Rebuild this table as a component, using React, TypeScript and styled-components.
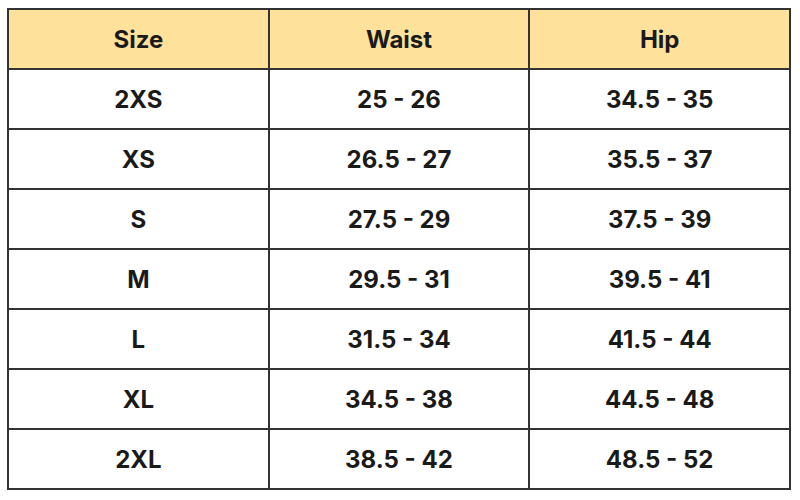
import React from "react";
import styled, { createGlobalStyle } from "styled-components";

const Global = createGlobalStyle`
  html, body { margin: 0; padding: 0; background: #ffffff; }
  body { font-family: "Inter", "Open Sans", sans-serif; }
`;

const Page = styled.div`
  width: 800px;
  height: 500px;
  padding: 8px 0 0 7px;
  box-sizing: border-box;
`;

const Table = styled.table`
  border-collapse: collapse;
  width: 784px;
  table-layout: fixed;
`;

const HeadCell = styled.th`
  background: #fee29b;
  border: 2px solid #333333;
  height: 58px;
  padding: 0;
  font-size: 24px;
  font-weight: 700;
  color: #1a1a1a;
  text-align: center;
  vertical-align: middle;
`;

const Cell = styled.td`
  background: #ffffff;
  border: 2px solid #333333;
  height: 58px;
  padding: 0;
  font-size: 24px;
  font-weight: 700;
  color: #1a1a1a;
  text-align: center;
  vertical-align: middle;
`;

const rows: [string, string, string][] = [
  ["2XS", "25 - 26", "34.5 - 35"],
  ["XS", "26.5 - 27", "35.5 - 37"],
  ["S", "27.5 - 29", "37.5 - 39"],
  ["M", "29.5 - 31", "39.5 - 41"],
  ["L", "31.5 - 34", "41.5 - 44"],
  ["XL", "34.5 - 38", "44.5 - 48"],
  ["2XL", "38.5 - 42", "48.5 - 52"],
];

export default function App() {
  return (
    <>
      <Global />
      <Page>
        <Table>
          <thead>
            <tr>
              <HeadCell>Size</HeadCell>
              <HeadCell>Waist</HeadCell>
              <HeadCell>Hip</HeadCell>
            </tr>
          </thead>
          <tbody>
            {rows.map((r) => (
              <tr key={r[0]}>
                {r.map((c, i) => (
                  <Cell key={i}>{c}</Cell>
                ))}
              </tr>
            ))}
          </tbody>
        </Table>
      </Page>
    </>
  );
}
